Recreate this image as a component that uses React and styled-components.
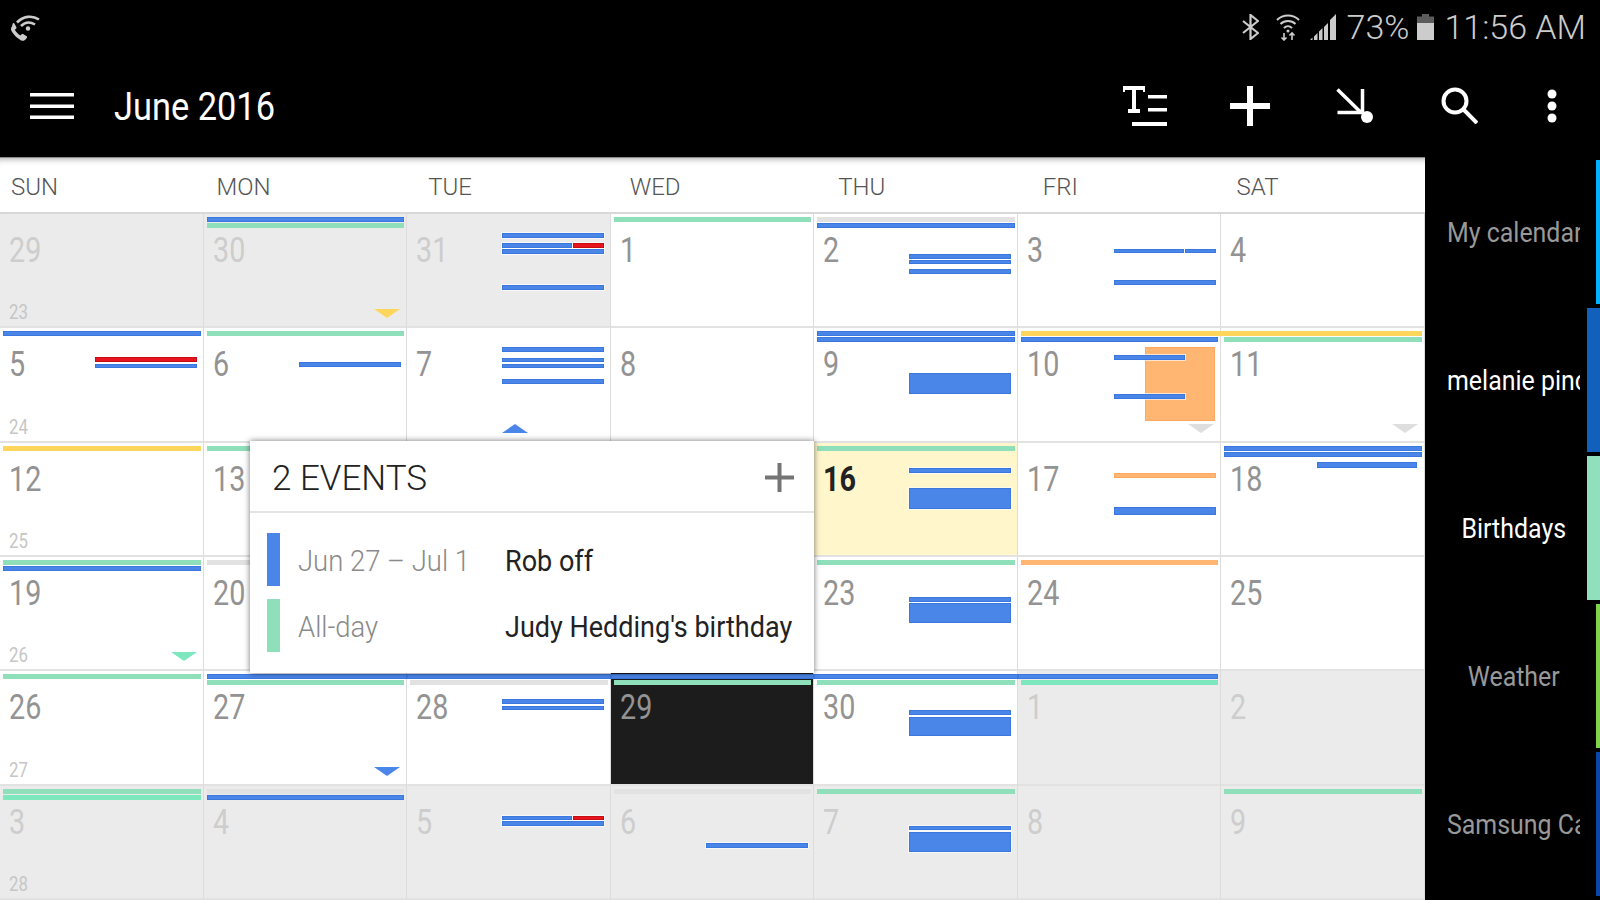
import React from 'react'
import styled, { createGlobalStyle } from 'styled-components'

const BLUE = '#4a86e8'
const GREEN = '#8fe0ba'
const MINT = '#7de8bd'
const YELLOW = '#ffd65c'
const ORANGE = '#ffb673'
const GREY = '#e2e2e2'
const RED = '#e8141e'

const GlobalStyle = createGlobalStyle`
  html, body {
    margin: 0;
    padding: 0;
    background: #000;
    overflow: hidden;
  }
  body {
    font-family: Roboto, "Liberation Sans", sans-serif;
  }
`

const Page = styled.div`
  width: 1600px;
  height: 900px;
  display: flex;
  flex-direction: column;
  overflow: hidden;
  background: #000;
`

const StatusBar = styled.div`
  height: 54px;
  display: flex;
  align-items: center;
  justify-content: space-between;
  padding: 0 14px 0 9px;
  color: #ccc;
`

const StatusRight = styled.div`
  display: flex;
  align-items: center;
`

const StatusIcon = styled.div`
  display: flex;
  margin-left: ${(p) => p.$ml || 0}px;
`

const StatusText = styled.span`
  font-size: 34px;
  font-weight: 300;
  line-height: 1;
  margin: 0 ${(p) => p.$mr || 0}px 0 ${(p) => p.$ml || 0}px;
`

const Toolbar = styled.div`
  height: 103px;
  display: flex;
  align-items: center;
  padding: 0 9px 0 30px;
  color: #fff;
`

const Title = styled.div`
  margin: 2px 0 0 40px;
  flex: 1;
  font-size: 38px;
  font-weight: 400;
  line-height: 1;
  transform: scaleX(0.905);
  transform-origin: left center;
`

const ToolSlot = styled.div`
  width: ${(p) => p.$w || 105}px;
  display: flex;
  justify-content: center;
  align-items: center;
`

const Main = styled.div`
  flex: 1;
  display: flex;
  min-height: 0;
`

const Calendar = styled.div`
  position: relative;
  width: 1425px;
  display: flex;
  flex-direction: column;
  background: #fff;
`

const DayHeader = styled.div`
  height: 54px;
  display: grid;
  grid-template-columns: repeat(7, 1fr);
  align-items: center;
  border-top: 1px solid #8a8a8a;
  border-bottom: 2px solid #d8d8d8;
  box-shadow: inset 0 7px 6px -6px rgba(0, 0, 0, 0.35);
`

const DayName = styled.div`
  padding-left: ${(p) => p.$x}px;
  margin-top: 3px;
  font-size: 24px;
  font-weight: 300;
  color: #555;
`

const Grid = styled.div`
  flex: 1;
  display: grid;
  grid-template-columns: repeat(7, 1fr);
  grid-template-rows: repeat(6, 1fr);
  min-height: 0;
`

const Cell = styled.div`
  position: relative;
  display: flex;
  flex-direction: column;
  align-items: flex-start;
  box-sizing: border-box;
  padding: 19px 0 4px 9px;
  min-width: 0;
  border-right: 1px solid #dcdcdc;
  border-bottom: 2px solid #e2e2e2;
  background: ${(p) => (p.$selected ? '#1c1c1c' : p.$today ? '#fff6cc' : p.$muted ? '#ebebeb' : '#fff')};
`

const DayNumber = styled.div`
  font-size: 35px;
  line-height: 35px;
  font-weight: ${(p) => (p.$today ? 700 : 400)};
  color: ${(p) => (p.$today ? '#222' : p.$muted ? '#cdcdcd' : '#939393')};
  transform: scaleX(0.82);
  transform-origin: left center;
`

const WeekNumber = styled.div`
  margin-top: auto;
  font-size: 20px;
  line-height: 20px;
  font-weight: 400;
  color: #c6c6c6;
  transform: scaleX(0.84);
  transform-origin: left center;
`

const AllDayStack = styled.div`
  position: absolute;
  top: 3px;
  left: 0;
  right: -1px;
  display: flex;
  flex-direction: column;
  gap: 1px;
`

const AllDayBar = styled.div`
  height: 5px;
  background: ${(p) => p.$c};
  margin: 0 ${(p) => (p.$joinRight ? 0 : 3)}px 0 ${(p) => (p.$joinLeft ? 0 : 3)}px;
  box-shadow: ${(p) => (p.$c === BLUE ? 'inset 0 0 0 1px #3a78e0' : 'none')};
`

const blockEdge = { [ORANGE]: 'inset 0 0 0 1px #ffa860', [RED]: '0 0 0 1px rgba(255, 255, 255, 0.65), inset 0 0 0 1px #c80c14' }

const Block = styled.div`
  position: absolute;
  left: ${(p) => p.$l}px;
  top: ${(p) => p.$t}px;
  width: ${(p) => p.$w}px;
  height: ${(p) => p.$h}px;
  background: ${(p) => p.$c};
  box-shadow: ${(p) => blockEdge[p.$c] || '0 0 0 1px rgba(255, 255, 255, 0.65), inset 0 0 0 1px #3a78e0'};
`

const Triangle = styled.div`
  position: absolute;
  bottom: 8px;
  ${(p) => (p.$up ? 'left: 95px;' : 'right: 6px;')}
  width: 0;
  height: 0;
  border-left: 13.5px solid transparent;
  border-right: 13.5px solid transparent;
  ${(p) => (p.$up ? 'border-bottom' : 'border-top')}: 9px solid ${(p) => p.$c};
`

const Popup = styled.div`
  position: absolute;
  left: 250px;
  top: 284px;
  width: 564px;
  height: 232px;
  background: #fff;
  box-shadow: 0 0 6px rgba(0, 0, 0, 0.55);
  z-index: 2;
`

const PopupHeader = styled.div`
  height: 72px;
  display: flex;
  align-items: center;
  justify-content: space-between;
  padding: 2px 20px 0 22px;
  box-sizing: border-box;
  border-bottom: 2px solid #e4e4e4;
`

const PopupTitle = styled.div`
  font-size: 35px;
  font-weight: 300;
  color: #222;
  margin-top: 2px;
`

const PopupBody = styled.div`
  padding: 20px 0 0 17px;
  display: flex;
  flex-direction: column;
  gap: 13px;
`

const EventRow = styled.div`
  display: flex;
  align-items: center;
  height: 53px;
`

const EventMark = styled.div`
  flex: none;
  width: 13px;
  height: 53px;
  background: ${(p) => p.$c};
`

const EventWhen = styled.div`
  flex: none;
  width: 207px;
  margin: 2px 0 0 18px;
  font-size: 30px;
  font-weight: 300;
  color: #8a8a8a;
  white-space: nowrap;
  transform: scaleX(0.915);
  transform-origin: left center;
`

const EventName = styled.div`
  flex: none;
  margin-top: 2px;
  font-size: 30px;
  font-weight: 400;
  color: #222;
  white-space: nowrap;
  transform: scaleX(0.9);
  transform-origin: left center;
`

const Side = styled.div`
  width: 175px;
  display: flex;
  flex-direction: column;
  gap: 4px;
  padding-top: 3px;
`

const SideItem = styled.div`
  height: 144px;
  display: flex;
  align-items: center;
  padding-left: 22px;
`

const SideLabel = styled.div`
  width: 133px;
  overflow: hidden;
  display: flex;
  justify-content: ${(p) => (p.$clip ? 'flex-start' : 'center')};
  font-size: 28px;
  color: ${(p) => (p.$on ? '#fff' : '#999')};
`

const SideText = styled.span`
  flex: none;
  white-space: nowrap;
  transform: scaleX(0.89);
  transform-origin: ${(p) => (p.$clip ? 'left' : 'center')} center;
`

const SideStrip = styled.div`
  margin-left: auto;
  align-self: stretch;
  width: ${(p) => (p.$on ? 13 : 4)}px;
  background: ${(p) => p.$c};
`

const WifiCallIcon = () => (
  <svg width="31" height="29" viewBox="0 0 31 29" fill="none">
    <path
      d="M3 13.5c-1.6 1.6-1.2 3.6.3 5.800 2 3 5 6 8.500 8 1.700 1 3.500.6 4.700-.8l1.300-1.500c.5-.6.400-1.300-.2-1.700l-3.500-2.200c-.5-.3-1.100-.3-1.500.2l-1.100 1.200c-2.300-1.300-4.300-3.300-5.700-5.800l1.300-1c.5-.4.600-1 .3-1.500l-2-3.600c-.4-.6-1.100-.7-1.700-.2z"
      fill="#ccc"
    />
    <path d="M8 9.500C14 3 23 2 30 6.500" stroke="#ccc" strokeWidth="2.600" />
    <path d="M12 13c4-4 9-4.500 14-1.500" stroke="#ccc" strokeWidth="2.600" />
    <circle cx="19" cy="15.500" r="2.200" fill="#ccc" />
  </svg>
)

const BluetoothIcon = () => (
  <svg width="17" height="26" viewBox="0 0 17 26" fill="none" stroke="#ccc" strokeWidth="2.200">
    <path d="M1 7l15 12-7.500 6V1L16 7 1 19" />
  </svg>
)

const WifiIcon = () => (
  <svg width="24" height="27" viewBox="0 0 24 27" fill="none" stroke="#ccc" strokeWidth="2">
    <path d="M1 6c6-6 16-6 22 0" />
    <path d="M4.500 10c4-4 11-4 15 0" />
    <path d="M8 14c2.500-2.500 5.500-2.500 8 0" />
    <circle cx="12" cy="17" r="1.500" fill="#ccc" stroke="none" />
    <path d="M8 19v7M5.500 23.500L8 26l2.500-2.500M16 26v-7M13.500 21.500L16 19l2.500 2.500" strokeWidth="1.600" />
  </svg>
)

const SignalIcon = () => (
  <svg width="27" height="26" viewBox="0 0 27 26" fill="#ccc">
    <path d="M0 26h2.500v-2.500L0 26zM4 26h3.500v-7L4 22.500V26zM9 26h3.500V14L9 17.500V26zM14 26h4V9l-4 4v13zM20 26h6V0l-6 6v20z" />
  </svg>
)

const BatteryIcon = () => (
  <svg width="17" height="26" viewBox="0 0 17 26">
    <path d="M5 0h7v2.500h5V9H0V2.500h5z" fill="#5c5c5c" />
    <rect x="0" y="9" width="17" height="17" fill="#ccc" />
  </svg>
)

const MenuIcon = () => (
  <svg width="44" height="26" viewBox="0 0 44 26" fill="#fff">
    <rect y="0" width="44" height="3.500" />
    <rect y="11.500" width="44" height="3.500" />
    <rect y="22.500" width="44" height="3.500" />
  </svg>
)

const TextLinesIcon = () => (
  <svg width="44" height="40" viewBox="0 0 44 40" fill="#fff">
    <path d="M0 0h22v6h-2V4h-7v19h4v4H5v-4h4V4H2v2H0z" />
    <rect x="25" y="9" width="19" height="3.500" />
    <rect x="25" y="22" width="19" height="3.500" />
    <rect x="9" y="36" width="35" height="4" />
  </svg>
)

const PlusIcon = ({ size, color, bar }) => (
  <svg width={size} height={size} viewBox={`0 0 ${size} ${size}`} fill={color}>
    <rect x={(size - bar) / 2} y="0" width={bar} height={size} />
    <rect x="0" y={(size - bar) / 2} width={size} height={bar} />
  </svg>
)

const GoToIcon = () => (
  <svg width="37" height="35" viewBox="0 0 37 35" fill="none">
    <path d="M1.500 1.500l23 22.500M1.500 24.500h25V1" stroke="#fff" strokeWidth="3.500" />
    <circle cx="31" cy="29" r="6" fill="#fff" />
  </svg>
)

const SearchIcon = () => (
  <svg width="37" height="37" viewBox="0 0 37 37" fill="none" stroke="#fff" strokeWidth="4">
    <circle cx="14" cy="14" r="11.500" />
    <path d="M22.500 22.500L36 36" />
  </svg>
)

const MoreIcon = () => (
  <svg width="10" height="34" viewBox="0 0 10 34" fill="#fff">
    <circle cx="5" cy="5" r="4.500" />
    <circle cx="5" cy="17" r="4.500" />
    <circle cx="5" cy="29" r="4.500" />
  </svg>
)

const days = [
  ['SUN', 11],
  ['MON', 13],
  ['TUE', 21],
  ['WED', 19],
  ['THU', 24],
  ['FRI', 25],
  ['SAT', 15],
]

// time blocks: [top, height, colour, left, width]
const b = (t, h, c = BLUE, l = 95, w = 102) => ({ t, h, c, l, w })
const bar = (c, joinLeft, joinRight) => ({ c, joinLeft, joinRight })

const cells = [
  { n: 29, muted: true, week: 23 },
  { n: 30, muted: true, bars: [bar(BLUE), bar(GREEN)], tri: { c: YELLOW } },
  { n: 31, muted: true, blocks: [b(19, 5), b(29, 5, BLUE, 95, 70), b(29, 5, RED, 166, 31), b(35, 5), b(71, 5)] },
  { n: 1, bars: [bar(GREEN)] },
  { n: 2, bars: [bar(GREY), bar(BLUE)], blocks: [b(40, 5), b(46, 4), b(55, 5)] },
  { n: 3, blocks: [b(35, 4, BLUE, 96, 70), b(35, 4, BLUE, 167, 31), b(66, 5, BLUE, 96, 102)] },
  { n: 4 },

  { n: 5, week: 24, bars: [bar(BLUE)], blocks: [b(29, 5, RED), b(36, 4)] },
  { n: 6, bars: [bar(GREEN)], blocks: [b(34, 5)] },
  { n: 7, blocks: [b(19, 5), b(30, 4), b(36, 4), b(51, 5)], tri: { c: BLUE, up: true } },
  { n: 8 },
  { n: 9, bars: [bar(BLUE), bar(BLUE)], blocks: [b(45, 21)] },
  {
    n: 10,
    bars: [bar(YELLOW, false, true), bar(BLUE)],
    blocks: [b(19, 74, ORANGE, 127, 70), b(27, 5, BLUE, 96, 71), b(66, 5, BLUE, 96, 71)],
    tri: { c: '#dedede' },
  },
  { n: 11, bars: [bar(YELLOW, true), bar(GREEN)], tri: { c: '#dedede' } },

  { n: 12, week: 25, bars: [bar(YELLOW)] },
  { n: 13, bars: [bar(GREEN)] },
  {},
  {},
  { n: 16, today: true, bars: [bar(GREEN)], blocks: [b(25, 5), b(45, 21)] },
  { n: 17, blocks: [b(30, 5, ORANGE, 96, 102), b(64, 8, BLUE, 96, 102)] },
  { n: 18, bars: [bar(BLUE), bar(BLUE)], blocks: [b(19, 6, BLUE, 96, 100)] },

  { n: 19, week: 26, bars: [bar(GREEN), bar(BLUE)], tri: { c: MINT } },
  { n: 20, bars: [bar(GREY)] },
  {},
  {},
  { n: 23, bars: [bar(GREEN)], blocks: [b(40, 5), b(46, 20)] },
  { n: 24, bars: [bar(ORANGE)] },
  { n: 25 },

  { n: 26, week: 27, bars: [bar(GREEN)] },
  { n: 27, bars: [bar(BLUE, false, true), bar(GREEN)], tri: { c: BLUE } },
  { n: 28, bars: [bar(BLUE, true, true), bar(GREY)], blocks: [b(28, 5), b(35, 4)] },
  { n: 29, selected: true, bars: [bar(BLUE, true, true), bar(GREEN)] },
  { n: 30, bars: [bar(BLUE, true, true), bar(GREEN)], blocks: [b(39, 5), b(46, 19)] },
  { n: 1, muted: true, bars: [bar(BLUE, true), bar(MINT)] },
  { n: 2, muted: true },

  { n: 3, muted: true, week: 28, bars: [bar(GREEN), bar(MINT)] },
  { n: 4, muted: true, bars: [bar(GREY), bar(BLUE)] },
  { n: 5, muted: true, blocks: [b(30, 4, BLUE, 95, 70), b(30, 4, RED, 166, 31), b(35, 5)] },
  { n: 6, muted: true, bars: [bar(GREY)], blocks: [b(57, 5)] },
  { n: 7, muted: true, bars: [bar(GREEN)], blocks: [b(40, 4), b(46, 20)] },
  { n: 8, muted: true },
  { n: 9, muted: true, bars: [bar(GREEN)] },
]

const calendars = [
  { name: 'My calendar', c: '#00b0ff', clip: true },
  { name: 'melanie pinc', c: '#1160bb', on: true, clip: true },
  { name: 'Birthdays', c: '#90e0bd', on: true },
  { name: 'Weather', c: '#7ed348' },
  { name: 'Samsung Ca', c: '#0a47a9', clip: true },
]

function DayCell({ cell }) {
  const { n, muted, today, selected, week, bars = [], blocks = [], tri } = cell
  return (
    <Cell $muted={muted} $today={today} $selected={selected}>
      {n && <DayNumber $muted={muted} $today={today}>{n}</DayNumber>}
      {week && <WeekNumber>{week}</WeekNumber>}
      {bars.length > 0 && (
        <AllDayStack>
          {bars.map((item, i) => (
            <AllDayBar key={i} $c={item.c} $joinLeft={item.joinLeft} $joinRight={item.joinRight} />
          ))}
        </AllDayStack>
      )}
      {blocks.map((item, i) => (
        <Block key={i} $t={item.t} $h={item.h} $c={item.c} $l={item.l} $w={item.w} />
      ))}
      {tri && <Triangle $c={tri.c} $up={tri.up} />}
    </Cell>
  )
}

export default function App() {
  return (
    <Page>
      <GlobalStyle />
      <StatusBar>
        <WifiCallIcon />
        <StatusRight>
          <StatusIcon><BluetoothIcon /></StatusIcon>
          <StatusIcon $ml={17}><WifiIcon /></StatusIcon>
          <StatusIcon $ml={10}><SignalIcon /></StatusIcon>
          <StatusText $ml={10} $mr={8}>73%</StatusText>
          <StatusIcon><BatteryIcon /></StatusIcon>
          <StatusText $ml={10}>11:56 AM</StatusText>
        </StatusRight>
      </StatusBar>
      <Toolbar>
        <MenuIcon />
        <Title>June 2016</Title>
        <ToolSlot><TextLinesIcon /></ToolSlot>
        <ToolSlot><PlusIcon size={40} color="#fff" bar={6} /></ToolSlot>
        <ToolSlot><GoToIcon /></ToolSlot>
        <ToolSlot><SearchIcon /></ToolSlot>
        <ToolSlot $w={79}><MoreIcon /></ToolSlot>
      </Toolbar>
      <Main>
        <Calendar>
          <DayHeader>
            {days.map(([name, x]) => (
              <DayName key={name} $x={x}>{name}</DayName>
            ))}
          </DayHeader>
          <Grid>
            {cells.map((cell, i) => (
              <DayCell key={i} cell={cell} />
            ))}
          </Grid>
          <Popup>
            <PopupHeader>
              <PopupTitle>2 EVENTS</PopupTitle>
              <PlusIcon size={29} color="#757575" bar={4} />
            </PopupHeader>
            <PopupBody>
              <EventRow>
                <EventMark $c={BLUE} />
                <EventWhen>Jun 27 – Jul 1</EventWhen>
                <EventName>Rob off</EventName>
              </EventRow>
              <EventRow>
                <EventMark $c={GREEN} />
                <EventWhen>All-day</EventWhen>
                <EventName>Judy Hedding's birthday</EventName>
              </EventRow>
            </PopupBody>
          </Popup>
        </Calendar>
        <Side>
          {calendars.map((item) => (
            <SideItem key={item.name}>
              <SideLabel $on={item.on} $clip={item.clip}>
                <SideText $clip={item.clip}>{item.name}</SideText>
              </SideLabel>
              <SideStrip $c={item.c} $on={item.on} />
            </SideItem>
          ))}
        </Side>
      </Main>
    </Page>
  )
}
